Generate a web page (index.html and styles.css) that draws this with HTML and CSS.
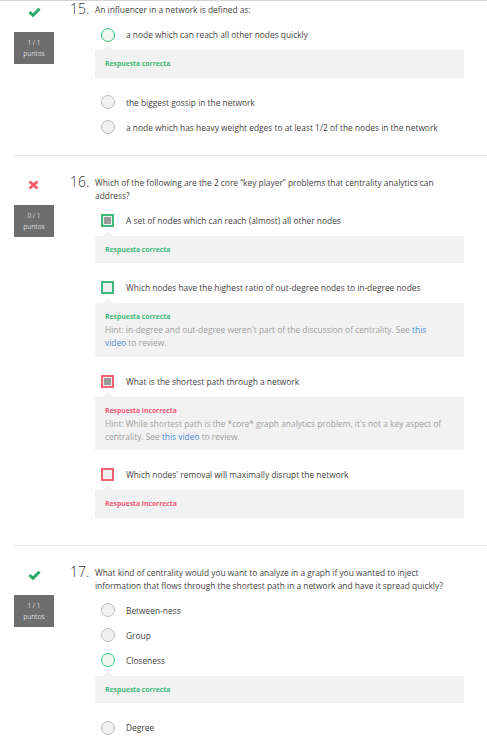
FILE: index.html
```html
<!DOCTYPE html>
<html lang="es">
<head>
<meta charset="utf-8">
<title>Quiz</title>
<link rel="stylesheet" href="styles.css">
</head>
<body>
<div class="topline"></div>
<div class="quiz">

  <section class="question first">
    <div class="side">
      <svg class="mark" width="13" height="10" viewBox="0 0 13 10"><path d="M1.5 5 L5 8.3 L11.5 1.7" fill="none" stroke="#27a96a" stroke-width="3"/></svg>
      <div class="score">1 / 1<br>puntos</div>
    </div>
    <div class="main">
      <div class="head"><span class="num">15.</span><p class="qtext">An influencer in a network is defined as:</p></div>
      <ul class="options">
        <li>
          <div class="opt"><span class="radio good"></span><span class="label">a node which can reach all other nodes quickly</span></div>
          <div class="fb"><b class="ok">Respuesta correcta</b></div>
        </li>
        <li><div class="opt"><span class="radio"></span><span class="label">the biggest gossip in the network</span></div></li>
        <li><div class="opt"><span class="radio"></span><span class="label">a node which has heavy weight edges to at least 1/2 of the nodes in the network</span></div></li>
      </ul>
    </div>
  </section>

  <section class="question">
    <div class="side">
      <svg class="mark" width="11" height="10" viewBox="0 0 11 10"><path d="M1.5 1.5 L9.5 8.5 M9.5 1.5 L1.5 8.5" fill="none" stroke="#f25a6a" stroke-width="2.8"/></svg>
      <div class="score">0 / 1<br>puntos</div>
    </div>
    <div class="main">
      <div class="head"><span class="num">16.</span><p class="qtext">Which of the following are the 2 core “key player” problems that centrality analytics can address?</p></div>
      <ul class="options">
        <li>
          <div class="opt"><span class="check good on"></span><span class="label">A set of nodes which can reach (almost) all other nodes</span></div>
          <div class="fb"><b class="ok">Respuesta correcta</b></div>
        </li>
        <li>
          <div class="opt"><span class="check good"></span><span class="label">Which nodes have the highest ratio of out-degree nodes to in-degree nodes</span></div>
          <div class="fb"><b class="ok">Respuesta correcta</b><span class="hint">Hint: in-degree and out-degree weren't part of the discussion of centrality. See <a href="#">this video</a> to review.</span></div>
        </li>
        <li>
          <div class="opt"><span class="check bad on"></span><span class="label">What is the shortest path through a network</span></div>
          <div class="fb"><b class="ko">Respuesta incorrecta</b><span class="hint">Hint: While shortest path is the *core* graph analytics problem, it's not a key aspect of centrality. See <a href="#">this video</a> to review.</span></div>
        </li>
        <li>
          <div class="opt"><span class="check bad"></span><span class="label">Which nodes' removal will maximally disrupt the network</span></div>
          <div class="fb"><b class="ko">Respuesta incorrecta</b></div>
        </li>
      </ul>
    </div>
  </section>

  <section class="question">
    <div class="side">
      <svg class="mark" width="13" height="10" viewBox="0 0 13 10"><path d="M1.5 5 L5 8.3 L11.5 1.7" fill="none" stroke="#27a96a" stroke-width="3"/></svg>
      <div class="score">1 / 1<br>puntos</div>
    </div>
    <div class="main">
      <div class="head"><span class="num">17.</span><p class="qtext">What kind of centrality would you want to analyze in a graph if you wanted to inject information that flows through the shortest path in a network and have it spread quickly?</p></div>
      <ul class="options">
        <li><div class="opt"><span class="radio"></span><span class="label">Between-ness</span></div></li>
        <li><div class="opt"><span class="radio"></span><span class="label">Group</span></div></li>
        <li>
          <div class="opt"><span class="radio good"></span><span class="label">Closeness</span></div>
          <div class="fb"><b class="ok">Respuesta correcta</b></div>
        </li>
        <li><div class="opt"><span class="radio"></span><span class="label">Degree</span></div></li>
      </ul>
    </div>
  </section>

</div>
</body>
</html>
```

FILE: styles.css
```css
* { box-sizing: border-box; }
html, body { margin: 0; padding: 0; background: #fff; }
body {
  font-family: "Open Sans", "DejaVu Sans", sans-serif;
  font-size: 8.4px;
  line-height: 13px;
  color: #444;
  overflow: hidden;
}
.topline { height: 1px; background: #d4d4d4; }
.quiz { padding-left: 14px; }

.question {
  display: flex;
  border-top: 1px solid #e2e2e2;
  padding-top: 20px;
  padding-bottom: 21px;
}
.question.first { border-top: 0; padding-top: 2px; }

.side {
  width: 56px;
  flex: none;
  display: flex;
  flex-direction: column;
  padding-top: 4px;
}
.mark { display: block; margin: 0 auto 0 14px; height: 10px; }
.score {
  margin-top: 15px;
  width: 40px;
  height: 32px;
  background: #6e6e6e;
  color: #dedede;
  font-size: 6.5px;
  line-height: 11px;
  text-align: center;
  padding-top: 5px;
}

.main { width: 394px; flex: none; }

.head { display: flex; align-items: flex-start; }
.num {
  width: 25px;
  flex: none;
  margin-top: -1px;
  font-size: 14px;
  line-height: 13px;
  font-weight: 300;
  color: #333;
}
.qtext { margin: 0; flex: 1; color: #444; }

.options {
  list-style: none;
  margin: 12px 0 0 25px;
  padding: 0;
  display: flex;
  flex-direction: column;
  gap: 12px;
}

.opt { display: flex; align-items: center; height: 13px; padding-left: 6px; }
.label { margin-left: 12px; }

.radio {
  width: 14px; height: 14px; flex: none;
  margin-left: -0.5px; margin-right: -0.5px;
  border-radius: 50%;
  border: 1px solid #bdbdbd;
  background: #f1f1f1;
}
.radio.good { border: 1.5px solid #3cbf7f; background: #eef8f1; }

.check {
  width: 13px; height: 13px; flex: none;
  border: 2px solid #bdbdbd;
  background: #efefef;
}
.check.good { border-color: #3cb97b; }
.check.bad { border-color: #f26472; }
.check.on { background: #9a9a9a; box-shadow: inset 0 0 0 1px #ececec; }

.fb {
  position: relative;
  margin-top: 9px;
  margin-bottom: 6px;
  background: #f2f2f2;
  padding: 7px 18px 7.5px 10px;
  color: #999;
}
.fb::before {
  content: "";
  position: absolute;
  left: 8px;
  top: -5px;
  border-left: 5px solid transparent;
  border-right: 5px solid transparent;
  border-bottom: 5px solid #f2f2f2;
}
.fb b { display: block; font-size: 6.8px; font-weight: 700; }
.ok { color: #3fb97c; }
.ko { color: #f3587a; }
.hint { display: block; color: #a0a0a0; }
.hint a { color: #4d88d4; text-decoration: none; }
```
